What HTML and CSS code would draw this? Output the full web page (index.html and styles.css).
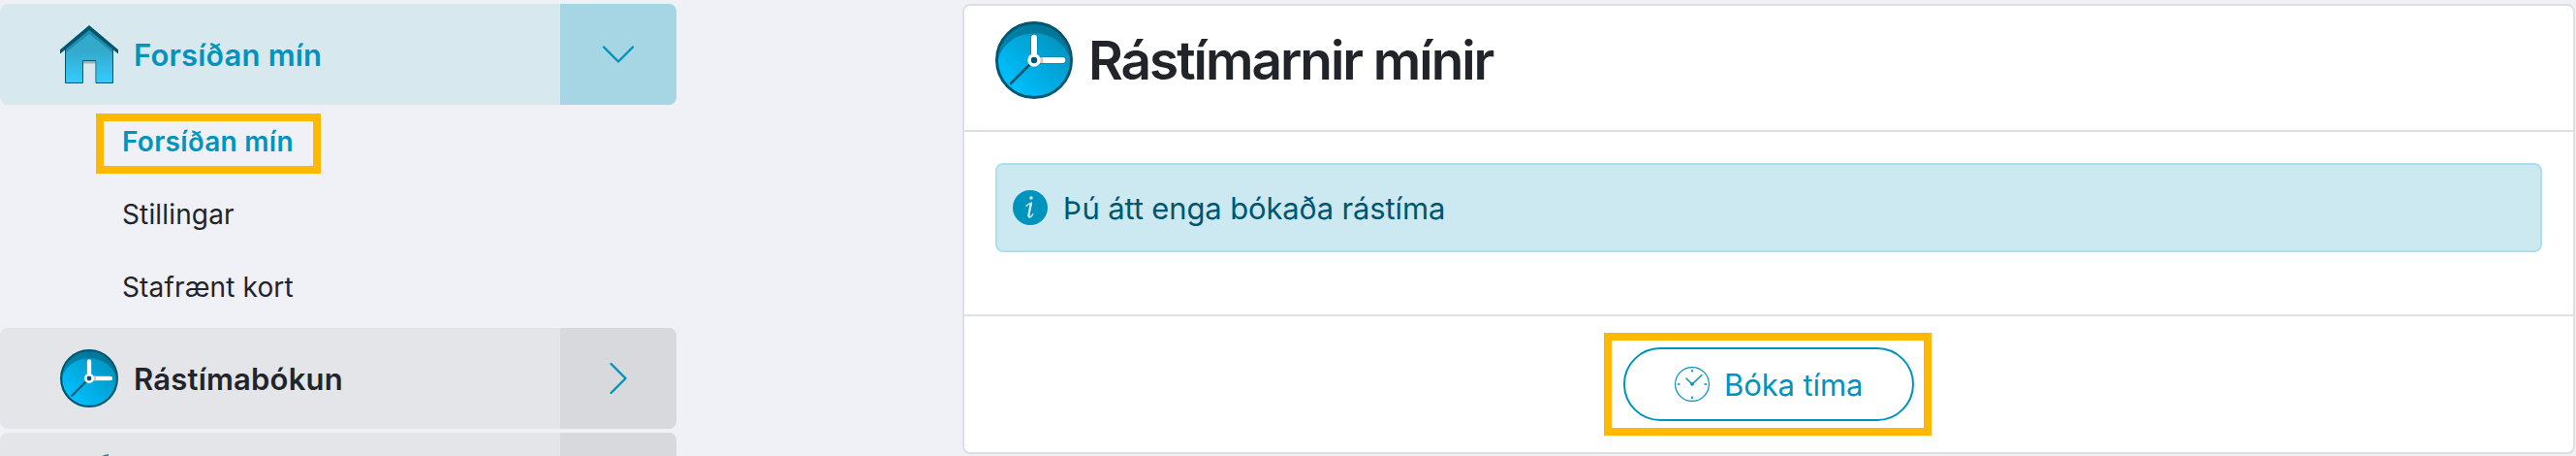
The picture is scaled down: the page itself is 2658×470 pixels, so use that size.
FILE: index.html
```html
<!DOCTYPE html>
<html lang="is">
<head>
    <meta charset="UTF-8">
    <meta name="viewport" content="width=device-width, initial-scale=1.0">
    <title>Forsíðan mín</title>
    <link rel="stylesheet" href="styles.css">
</head>
<body>
    <!-- shared clock icon -->
    <svg class="icon-defs" width="0" height="0">
        <defs>
            <linearGradient id="clockFill" x1="0.15" y1="0.85" x2="0.85" y2="0.15">
                <stop offset="0" stop-color="#00c0ff"/>
                <stop offset="1" stop-color="#0093bd"/>
            </linearGradient>
            <linearGradient id="houseFill" x1="0" y1="0" x2="0" y2="1">
                <stop offset="0.4" stop-color="#33a9cb"/>
                <stop offset="1" stop-color="#33ccff"/>
            </linearGradient>
            <symbol id="clock" viewBox="0 0 60 60">
                <circle cx="30" cy="30" r="29" fill="url(#clockFill)"/>
                <path d="M2 30a28 28 0 0 1 56 0a28.5 25.500 0 0 0-56 0z" fill="#00566f" fill-opacity="0.5"/>
                <circle cx="30" cy="30" r="28.900" fill="none" stroke="#00566f" stroke-width="2.200"/>
                <path d="M12 48L30 30" stroke="#00566f" stroke-width="2" stroke-linecap="round"/>
                <path d="M30 12.500V30H52" fill="none" stroke="#000" stroke-opacity="0.12" stroke-width="6" stroke-linecap="round"/>
                <path d="M30 12.500V30H52" fill="none" stroke="#fff" stroke-width="4.500" stroke-linecap="round"/>
                <path d="M34.500 27.750h2.500v4.500h-2.500z" fill="#ccc"/>
                <circle cx="30" cy="30" r="5" fill="#fff"/>
                <circle cx="30" cy="30" r="2.400" fill="#00566f"/>
            </symbol>
        </defs>
    </svg>

    <div class="page">
        <div class="sidebar">
            <div class="nav-item active">
                <div class="nav-link">
                    <svg class="nav-icon" viewBox="0 0 60 60">
                        <path d="M5.500 22L30 3L54.500 22V59.500H37.500V36.500H23V59.500H5.500z" fill="url(#houseFill)"/>
                        <path d="M5.500 22L30 3L54.500 22V28.500L30 9L5.500 28.500z" fill="#00566f" fill-opacity="0.35"/>
                        <path d="M5.500 22V59.500H23.500V36.500H37V59.500H54.500V22" fill="none" stroke="#00566f" stroke-width="1"/>
                        <path d="M24 37h12.500v2.500H24z" fill="#000" fill-opacity="0.25"/>
                        <path d="M0 25.200L30 0L60 25.200V29.500L30 5L0 29.500z" fill="#00566f"/>
                    </svg>
                    <span>Forsíðan mín</span>
                </div>
                <div class="nav-toggle">
                    <svg width="36" height="20" viewBox="0 0 36 20"><path d="M3 2.500L18 17.500L33 2.500"/></svg>
                </div>
            </div>
            <div class="subnav">
                <div class="subnav-item selected">Forsíðan mín</div>
                <div class="subnav-item">Stillingar</div>
                <div class="subnav-item">Stafrænt kort</div>
                <div class="highlight highlight-nav"></div>
            </div>
            <div class="nav-item">
                <div class="nav-link">
                    <svg class="nav-icon"><use href="#clock"/></svg>
                    <span>Rástímabókun</span>
                </div>
                <div class="nav-toggle">
                    <svg width="20" height="36" viewBox="0 0 20 36"><path d="M2.500 3L17.500 18L2.500 33"/></svg>
                </div>
            </div>
            <!-- next item, cut off by the bottom of the window -->
            <div class="nav-item">
                <div class="nav-link">
                    <svg class="nav-icon" viewBox="0 0 60 60"><path d="M41 3Q45 1 50 0V5H41z" fill="#2f7f95"/></svg>
                </div>
                <div class="nav-toggle"></div>
            </div>
        </div>

        <div class="card">
            <div class="card-header">
                <svg class="card-icon"><use href="#clock"/></svg>
                <h1>Rástímarnir mínir</h1>
            </div>
            <div class="card-body">
                <div class="alert">
                    <svg class="alert-icon" viewBox="0 0 36 36">
                        <circle cx="18" cy="18" r="18" fill="#0093bd"/>
                        <circle cx="19" cy="8" r="1.800" fill="#cce8f0"/>
                        <path d="M14 16.200Q17 13.500 19.300 13.300Q18 19 16.600 25.500Q16.100 28.300 17.400 28Q19 27.500 20.800 24.800" fill="none" stroke="#cce8f0" stroke-width="1.500" stroke-linecap="round"/>
                        <path d="M18.600 14.500L16.300 26.500" stroke="#cce8f0" stroke-width="2.200" stroke-linecap="round"/>
                    </svg>
                    <span>Þú átt enga bókaða rástíma</span>
                </div>
            </div>
            <div class="card-footer">
                <div class="book-wrap">
                    <button class="book-btn">
                        <svg class="btn-icon" viewBox="0 0 36 36">
                            <circle cx="18" cy="18" r="17.400" stroke-width="1.200"/>
                            <path d="M18 3v2.500M18 30.500v2.500M3 18h2.500M30.500 18h2.500" stroke-width="1.600"/>
                            <path d="M12 12L18 18L28 8.500" stroke-width="1.500" stroke-linecap="round"/>
                            <circle cx="18" cy="18" r="1.800" fill="#0093bd" stroke="none"/>
                        </svg>
                        <span>Bóka tíma</span>
                    </button>
                    <div class="highlight highlight-btn"></div>
                </div>
            </div>
        </div>
    </div>
</body>
</html>
```

FILE: styles.css
```css
* {
    box-sizing: border-box;
}

body {
    margin: 0;
    height: 470px;
    overflow: hidden;
    background-color: #f0f1f6;
    color: #212529;
    font-family: Inter, "Liberation Sans", sans-serif;
}

.icon-defs {
    position: absolute;
}

.page {
    display: flex;
    justify-content: space-between;
    align-items: flex-start;
    height: 470px;
    padding: 4px 1px 0 0;
    overflow: hidden;
}

/* sidebar */
.sidebar {
    width: 698px;
}

.nav-item {
    display: flex;
    height: 104px;
    margin-bottom: 4px;
    border-radius: 8px;
    overflow: hidden;
    background-color: #e4e5e9;
}

.nav-item.active {
    margin-bottom: 0;
    background-color: #d7e8ee;
    color: #0093bd;
}

.nav-link {
    display: flex;
    flex: 1;
    align-items: center;
    gap: 16px;
    padding-left: 62px;
    font-size: 31px;
    font-weight: 600;
    letter-spacing: 0.2px;
    white-space: nowrap;
}

.nav-icon {
    width: 60px;
    height: 60px;
}

.nav-toggle {
    display: flex;
    align-items: center;
    justify-content: center;
    width: 120px;
    background-color: #d8d9dd;
}

.active .nav-toggle {
    background-color: #a6d5e3;
}

.nav-toggle path {
    fill: none;
    stroke: #0093bd;
    stroke-width: 2.4;
    stroke-linecap: round;
    stroke-linejoin: round;
}

.subnav {
    position: relative;
    height: 230px;
    padding: 1px 0 0 126px;
}

.subnav-item {
    height: 75px;
    line-height: 75px;
    font-size: 28px;
    letter-spacing: 0.15px;
    white-space: nowrap;
}

.subnav-item.selected {
    color: #0093bd;
    font-weight: 600;
    letter-spacing: 0.3px;
}

/* yellow marker frames */
.highlight {
    position: absolute;
    border: 8px solid #fdb900;
}

.highlight-nav {
    left: 99px;
    top: 9px;
    width: 232px;
    height: 62px;
}

.highlight-btn {
    left: -20px;
    top: -15px;
    width: 338px;
    height: 106px;
}

/* card */
.card {
    width: 1664px;
    height: 464px;
    border: 2px solid #dedfe0;
    border-radius: 8px;
    background-color: #fff;
}

.card-header {
    display: flex;
    gap: 16px;
    height: 130px;
    padding: 16px 32px 0;
    border-bottom: 2px solid #dedfe0;
}

.card-icon {
    width: 80px;
    height: 80px;
}

h1 {
    margin: 0;
    font-size: 55px;
    font-weight: 600;
    letter-spacing: -2.05px;
    line-height: 80px;
    white-space: nowrap;
}

.card-body {
    height: 188px;
    padding: 32px 32px 0;
}

.alert {
    display: flex;
    align-items: center;
    gap: 16px;
    height: 92px;
    padding-left: 16px;
    border: 2px solid #b0dfec;
    border-radius: 8px;
    background-color: #cce8f0;
    color: #00566f;
    font-size: 31px;
    letter-spacing: -0.15px;
    white-space: nowrap;
}

.alert-icon {
    width: 36px;
    height: 36px;
}

.card-footer {
    display: flex;
    justify-content: center;
    padding-top: 32px;
    border-top: 2px solid #dee2e6;
}

.book-wrap {
    position: relative;
}

.book-btn {
    display: flex;
    align-items: center;
    gap: 15px;
    width: 300px;
    height: 76px;
    padding: 0 0 0 51px;
    border: 2px solid #0093bd;
    border-radius: 38px;
    background-color: #fff;
    color: #0093bd;
    font-family: inherit;
    font-size: 31px;
    letter-spacing: -0.1px;
    white-space: nowrap;
}

.btn-icon {
    width: 36px;
    height: 36px;
    fill: none;
    stroke: #0093bd;
}
```
